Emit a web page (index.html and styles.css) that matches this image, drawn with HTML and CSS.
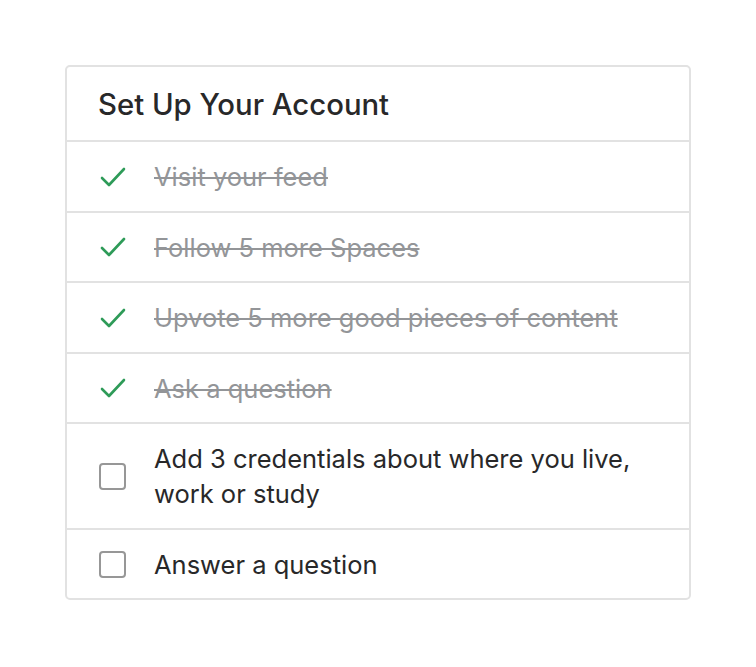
FILE: index.html
```html
<!DOCTYPE html>
<html>
<head>
<meta charset="utf-8">
<link rel="stylesheet" href="styles.css">
</head>
<body>
<div class="card">
  <div class="header">Set Up Your Account</div>
  <div class="row done">
    <span class="icon"><svg width="26" height="22" viewBox="0 0 26 22"><path d="M2 12 L9 19 L24 3" fill="none" stroke="#2e9b58" stroke-width="2.6" stroke-linecap="round" stroke-linejoin="round"/></svg></span>
    <span class="label">Visit your feed</span>
  </div>
  <div class="row done">
    <span class="icon"><svg width="26" height="22" viewBox="0 0 26 22"><path d="M2 12 L9 19 L24 3" fill="none" stroke="#2e9b58" stroke-width="2.6" stroke-linecap="round" stroke-linejoin="round"/></svg></span>
    <span class="label">Follow 5 more Spaces</span>
  </div>
  <div class="row done">
    <span class="icon"><svg width="26" height="22" viewBox="0 0 26 22"><path d="M2 12 L9 19 L24 3" fill="none" stroke="#2e9b58" stroke-width="2.6" stroke-linecap="round" stroke-linejoin="round"/></svg></span>
    <span class="label">Upvote 5 more good pieces of content</span>
  </div>
  <div class="row done">
    <span class="icon"><svg width="26" height="22" viewBox="0 0 26 22"><path d="M2 12 L9 19 L24 3" fill="none" stroke="#2e9b58" stroke-width="2.6" stroke-linecap="round" stroke-linejoin="round"/></svg></span>
    <span class="label">Ask a question</span>
  </div>
  <div class="row">
    <span class="icon"><span class="box"></span></span>
    <span class="label">Add 3 credentials about where you live, work or study</span>
  </div>
  <div class="row last">
    <span class="icon"><span class="box"></span></span>
    <span class="label">Answer a question</span>
  </div>
</div>
</body>
</html>
```
FILE: styles.css
```css
html, body {
  margin: 0;
  padding: 0;
  background: #ffffff;
}
body {
  font-family: Inter, "Noto Sans", "Liberation Sans", sans-serif;
  color: #282829;
  padding: 65px 0 0 65px;
}
.card {
  width: 622px;
  border: 2px solid #e2e2e2;
  border-radius: 5px;
  background: #fff;
}
.header {
  height: 75px;
  box-sizing: border-box;
  padding: 20px 0 0 31px;
  font-size: 29.3px;
  font-weight: 500;
  line-height: 36px;
  border-bottom: 2px solid #e2e2e2;
}
.row {
  display: flex;
  align-items: center;
  padding: 17px 0 16.5px;
  border-bottom: 2px solid #e2e2e2;
  font-size: 25.5px;
  line-height: 35px;
}
.row.last {
  border-bottom: none;
}
.icon {
  width: 27px;
  margin-left: 32px;
  margin-right: 28px;
  flex: none;
  display: flex;
  align-items: center;
  justify-content: center;
}
.box {
  display: block;
  width: 27px;
  height: 27px;
  box-sizing: border-box;
  border: 2.5px solid #979797;
  border-radius: 4px;
}
.label {
  flex: 1;
  padding-right: 40px;
}
.done .label {
  color: #939598;
  text-decoration: line-through;
  text-decoration-thickness: 2px;
}
```
